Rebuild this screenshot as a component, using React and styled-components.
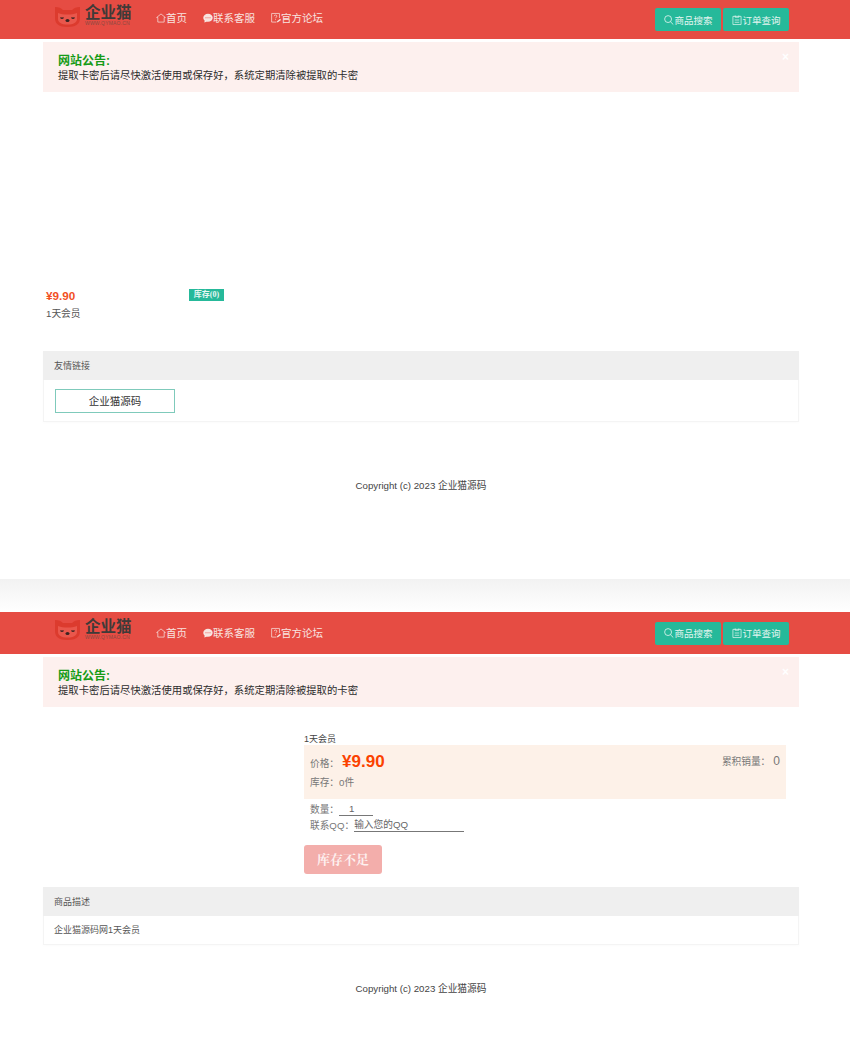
import React from "react";
import styled, { createGlobalStyle } from "styled-components";

const GlobalStyle = createGlobalStyle`
  * {
    box-sizing: border-box;
  }
  body {
    margin: 0;
    background: #fff;
    color: #333;
    font-family: "Liberation Sans", "Noto Sans CJK SC", sans-serif;
    font-size: 10px;
  }
`;

const Page = styled.section`
  height: ${(p) => p.$height}px;
  overflow: hidden;
`;

const PageGap = styled.div`
  height: 33px;
  background: linear-gradient(#f2f2f2, #fff);
`;

const Header = styled.header`
  height: ${(p) => p.$height}px;
  background: #e64c43;
  display: flex;
  align-items: center;
  justify-content: space-between;
  padding: 0 61px 0 54px;
`;

const Left = styled.div`
  display: flex;
  align-items: center;
`;

const Logo = styled.div`
  width: 102px;
  display: flex;
  align-items: center;
  gap: 4px;
  margin-top: -7px;
`;

const LogoText = styled.div`
  display: flex;
  flex-direction: column;
  color: #3f3a38;
  strong {
    font-size: 15.5px;
    line-height: 15px;
    font-weight: 700;
    white-space: nowrap;
  }
  span {
    font-size: 5px;
    line-height: 7px;
    letter-spacing: 0.2px;
    color: #8a4a42;
    white-space: nowrap;
  }
`;

const Nav = styled.nav`
  display: flex;
  gap: 16px;
  margin-top: ${(p) => (p.$tall ? "0" : "-3px")};
`;

const NavItem = styled.a`
  display: flex;
  align-items: center;
  color: #f8e4e0;
  font-size: 10.5px;
  line-height: 16px;
  svg {
    width: 10px;
    height: 12px;
    flex: none;
  }
`;

const Actions = styled.div`
  display: flex;
  gap: 2px;
`;

const ActionButton = styled.a`
  width: 66px;
  height: 23px;
  padding-left: 1px;
  background: #26b99a;
  border-radius: 2px;
  color: #e4f5f0;
  font-size: 9.5px;
  display: flex;
  align-items: center;
  justify-content: center;
  svg {
    width: 10px;
    height: 12px;
    flex: none;
  }
`;

const Notice = styled.div`
  position: relative;
  width: 756px;
  height: 50px;
  margin: 3px 0 0 43px;
  padding: 12px 15px 0;
  background: #fdf0ee;
  color: #2b2b2b;
  font-size: 10.35px;
  line-height: 14px;
`;

const NoticeTitle = styled.div`
  color: #169b16;
  font-size: 12px;
  font-weight: 700;
  line-height: 15px;
`;

const CloseMark = styled.span`
  position: absolute;
  top: 9px;
  right: 10px;
  color: #fff;
  font-size: 12px;
  font-weight: 700;
  line-height: 12px;
`;

const Goods = styled.div`
  display: flex;
  justify-content: space-between;
  width: 181px;
  margin: 197px 0 0 46px;
  height: 62px;
`;

const GoodsInfo = styled.div`
  display: flex;
  flex-direction: column;
`;

const GoodsPrice = styled.div`
  color: #f2501f;
  font-size: 11.7px;
  font-weight: 700;
  line-height: 14px;
`;

const GoodsName = styled.div`
  margin-top: 4px;
  color: #555;
  font-size: 9.7px;
  line-height: 14px;
`;

const StockBadge = styled.span`
  width: 35px;
  height: 12px;
  margin-right: 3px;
  background: #26b99a;
  color: #e8f7f3;
  font-family: "Liberation Serif", "Noto Sans CJK SC", serif;
  font-size: 8px;
  font-weight: 700;
  line-height: 12px;
  text-align: center;
`;

const Panel = styled.div`
  width: 756px;
  margin: ${(p) => p.$top}px 0 0 43px;
  border: 1px solid #f4f4f4;
  border-top: 0;
  box-shadow: 0 1px 3px rgba(0, 0, 0, 0.02);
`;

const PanelHead = styled.div`
  height: 29px;
  margin: 0 -1px;
  padding-left: 11px;
  background: #efefef;
  color: #555;
  font-size: 9px;
  line-height: 31px;
`;

const PanelBody = styled.div`
  height: ${(p) => p.$height}px;
  padding: ${(p) => p.$pad};
  color: #555;
  font-size: 9px;
  line-height: 28px;
`;

const FriendLink = styled.a`
  display: block;
  width: 120px;
  height: 24px;
  border: 1px solid #7fcabb;
  color: #333;
  font-size: 10.5px;
  line-height: 23px;
  text-align: center;
`;

const Copyright = styled.div`
  margin-top: ${(p) => p.$top}px;
  padding-right: 8px;
  color: #444;
  font-size: 9.7px;
  line-height: 14px;
  text-align: center;
`;

const Detail = styled.div`
  margin: 26px 64px 0 304px;
  height: 143px;
`;

const DetailTitle = styled.div`
  color: #444;
  font-size: 9px;
  line-height: 12px;
`;

const PriceBox = styled.div`
  height: 54px;
  padding: 5px 6px;
  background: #fdf1e8;
  color: #777;
  display: grid;
  grid-template-columns: 1fr auto;
  grid-template-rows: 22px 22px;
  font-size: 9.7px;
`;

const PriceRow = styled.div`
  display: flex;
  align-items: center;
  gap: 3px;
  span {
    margin-top: 4px;
  }
  strong {
    margin-top: 1px;
    color: #fb4200;
    font-size: 17px;
    font-weight: 700;
    line-height: 22px;
  }
`;

const Sales = styled.div`
  display: flex;
  align-items: center;
  gap: 3px;
  b {
    color: #777;
    font-size: 12px;
    font-weight: 400;
  }
`;

const StockLine = styled.div`
  grid-column: 1 / 3;
  line-height: 22px;
`;

const FormRow = styled.div`
  display: flex;
  align-items: flex-end;
  margin: ${(p) => p.$top}px 0 0 6px;
  height: 12px;
  color: #777;
  font-size: 9.7px;
  line-height: 12px;
`;

const FormValue = styled.div`
  width: ${(p) => p.$width}px;
  padding-left: ${(p) => p.$indent}px;
  border-bottom: 1px solid #777;
  color: #666;
  height: 13px;
`;

const SoldOut = styled.div`
  width: 78px;
  height: 29px;
  margin-top: 13px;
  background: #f3aeab;
  border-radius: 3px;
  color: #fdf0ef;
  font-family: "Liberation Serif", "Noto Serif CJK SC", "Noto Sans CJK SC", serif;
  font-size: 13px;
  font-weight: 700;
  line-height: 29px;
  text-align: center;
`;

const HomeIcon = () => (
  <svg viewBox="0 0 11 12" fill="none" stroke="currentColor" strokeWidth="0.8">
    <path d="M.7 5.500 5.500 1.500l4.800 4H9v5H2v-5Z" />
  </svg>
);

const ChatIcon = () => (
  <svg viewBox="0 0 11 12" fill="currentColor">
    <path d="M5.500 1.200c2.900 0 5.200 2 5.200 4.500s-2.300 4.500-5.200 4.500c-.6 0-1.200-.1-1.700-.2L1.500 11l.3-2.200C.9 8 .3 6.900.3 5.700c0-2.500 2.300-4.500 5.200-4.500Z" />
    <g fill="#e64c43">
      <circle cx="3.300" cy="5.700" r=".6" />
      <circle cx="5.500" cy="5.700" r=".6" />
      <circle cx="7.700" cy="5.700" r=".6" />
    </g>
  </svg>
);

const ForumIcon = () => (
  <svg viewBox="0 0 11 12" fill="none" stroke="currentColor" strokeWidth="0.8">
    <path d="M6 10.500H.7V1h8.600v5" />
    <path d="M3.500 4c0-1.700 3-1.700 3 0 0 1.200-1.500 1.100-1.500 2.300M5 7.300v.8" />
    <path d="m6.800 10.500 3.700-3" strokeWidth="1.500" />
  </svg>
);

const SearchIcon = () => (
  <svg viewBox="0 0 11 12" fill="none" stroke="currentColor" strokeWidth="0.9">
    <circle cx="4.500" cy="5" r="3.800" />
    <path d="m7.200 8 3 3" />
  </svg>
);

const OrderIcon = () => (
  <svg viewBox="0 0 11 12" fill="none" stroke="currentColor" strokeWidth="0.8">
    <path d="M1 2h9v9H1zM3.500 1v2h4V1M3 6h5M3 8.500h5" />
  </svg>
);

const CatLogo = () => (
  <svg width="27" height="23" viewBox="0 0 27 23">
    <path
      d="M1 2c4 0 6 1 8 3h9c2-2 4-3 8-3v11c0 6-4 9-12.500 9S1 19 1 13Z"
      fill="#dc3b2e"
    />
    <path d="M4 8c3 1.500 6 1.500 9.500 1.500S20 9.500 23 8v6c0 3.500-3.500 5.500-9.500 5.500S4 17.500 4 14Z" fill="#e9574c" />
    <path d="M6.500 12.500c1 1 2 1 3 0M17.500 12.500c1 1 2 1 3 0" fill="none" stroke="#3a2422" strokeWidth="1.200" />
    <ellipse cx="13.500" cy="15.500" rx="2" ry="1.500" fill="#3a2422" />
  </svg>
);

const TopBar = ({ height, tall }) => (
  <Header $height={height}>
    <Left>
      <Logo>
        <CatLogo />
        <LogoText>
          <strong>企业猫</strong>
          <span>WWW.QYMAO.CN</span>
        </LogoText>
      </Logo>
      <Nav $tall={tall}>
        <NavItem><HomeIcon />首页</NavItem>
        <NavItem><ChatIcon />联系客服</NavItem>
        <NavItem><ForumIcon />官方论坛</NavItem>
      </Nav>
    </Left>
    <Actions>
      <ActionButton><SearchIcon />商品搜索</ActionButton>
      <ActionButton><OrderIcon />订单查询</ActionButton>
    </Actions>
  </Header>
);

const Announcement = () => (
  <Notice>
    <NoticeTitle>网站公告:</NoticeTitle>
    提取卡密后请尽快激活使用或保存好，系统定期清除被提取的卡密
    <CloseMark>×</CloseMark>
  </Notice>
);

export default function App() {
  return (
    <>
      <GlobalStyle />
      <Page $height={579}>
        <TopBar height={39} />
        <Announcement />
        <Goods>
          <GoodsInfo>
            <GoodsPrice>¥9.90</GoodsPrice>
            <GoodsName>1天会员</GoodsName>
          </GoodsInfo>
          <StockBadge>库存(0)</StockBadge>
        </Goods>
        <Panel $top={0}>
          <PanelHead>友情链接</PanelHead>
          <PanelBody $height={41} $pad="9px 11px 0">
            <FriendLink>企业猫源码</FriendLink>
          </PanelBody>
        </Panel>
        <Copyright $top={57}>Copyright (c) 2023 企业猫源码</Copyright>
      </Page>
      <PageGap />
      <Page $height={441}>
        <TopBar height={42} tall />
        <Announcement />
        <Detail>
          <DetailTitle>1天会员</DetailTitle>
          <PriceBox>
            <PriceRow>
              <span>价格：</span>
              <strong>¥9.90</strong>
            </PriceRow>
            <Sales>
              累积销量：<b>0</b>
            </Sales>
            <StockLine>库存：0件</StockLine>
          </PriceBox>
          <FormRow $top={5}>
            数量：
            <FormValue $width={34} $indent={10}>1</FormValue>
          </FormRow>
          <FormRow $top={4}>
            联系QQ：
            <FormValue $width={110} $indent={0}>输入您的QQ</FormValue>
          </FormRow>
          <SoldOut>库存不足</SoldOut>
        </Detail>
        <Panel $top={11}>
          <PanelHead>商品描述</PanelHead>
          <PanelBody $height={28} $pad="0 10px">企业猫源码网1天会员</PanelBody>
        </Panel>
        <Copyright $top={37}>Copyright (c) 2023 企业猫源码</Copyright>
      </Page>
    </>
  );
}
